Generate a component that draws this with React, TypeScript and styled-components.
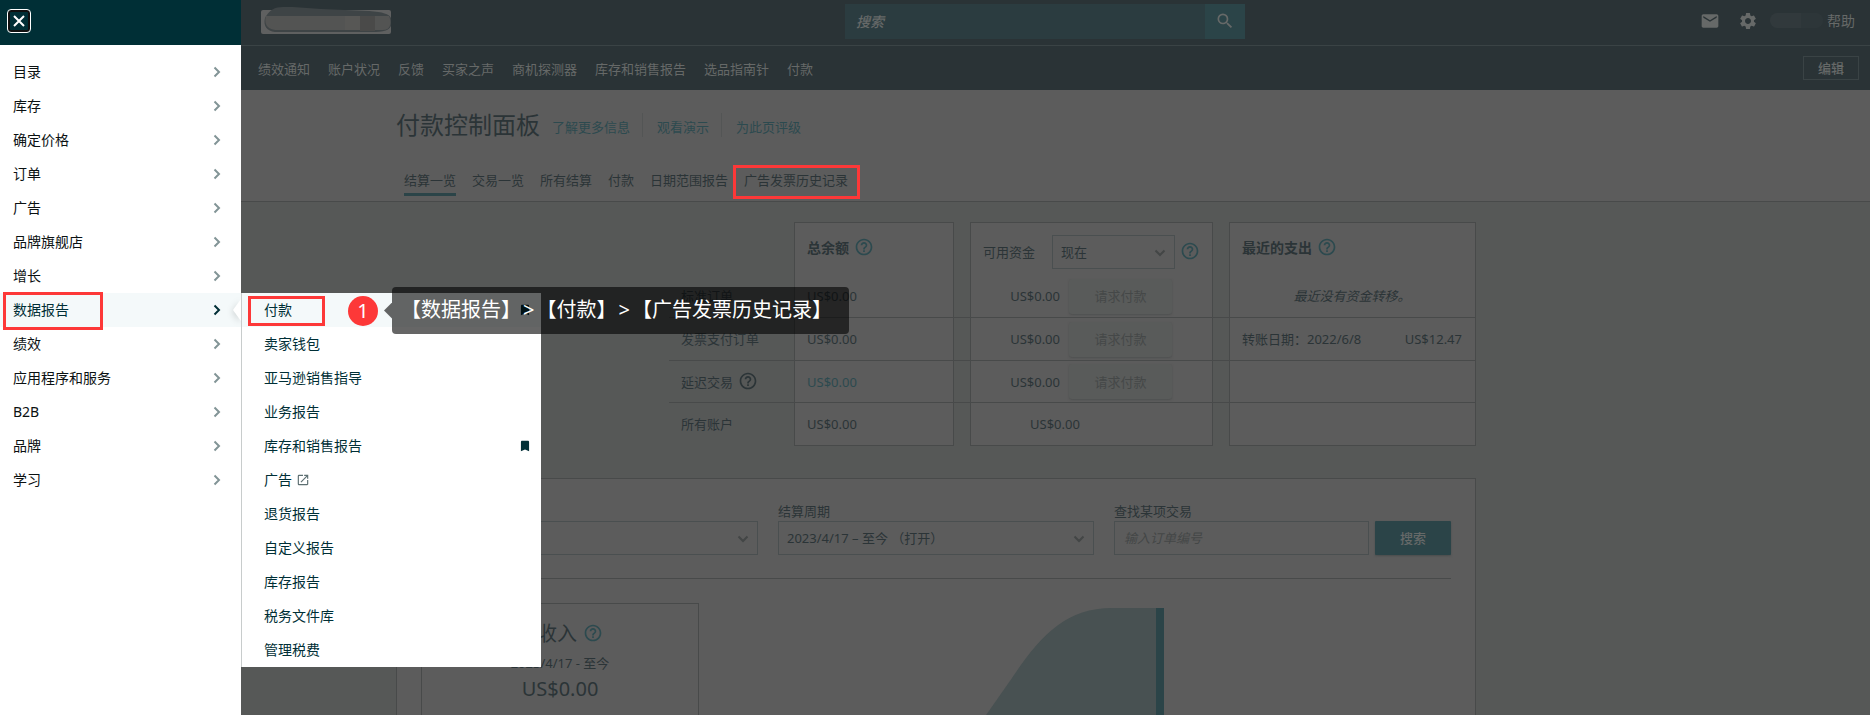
import React from "react";
import styled, { createGlobalStyle } from "styled-components";
import { MdBookmark, MdHelpOutline, MdMail, MdOpenInNew, MdSearch, MdSettings } from "react-icons/md";

const GlobalStyle = createGlobalStyle`
  * { box-sizing: border-box; }
  body {
    margin: 0;
    background: #565857;
    font-family: "Noto Sans", "Noto Sans CJK SC", sans-serif;
    font-size: 13px;
    line-height: 20px;
    color: #2b3437;
  }
  a { color: inherit; text-decoration: none; }
  button, input, select { font: inherit; color: inherit; border-radius: 0; }
  ul { list-style: none; margin: 0; padding: 0; }
`;

const c = {
  bar: "#2a3336",
  barLine: "#3a4345",
  barText: "#666968",
  surface: "#5c5c5c",
  border: "#484a4a",
  teal: "#2b4448",
  link: "#2c4a4f",
  ink: "#002f36",
  mark: "#fd3838",
};

const Screen = styled.div`
  position: relative;
  height: 100vh;
  overflow: hidden;
`;

/* ---------- Top bars ---------- */

const TopBar = styled.header`
  display: grid;
  grid-template-columns: 1fr 400px 1fr;
  align-items: center;
  height: 46px;
  padding: 0 15px 2px 235px;
  background: ${c.bar};
  border-bottom: 1px solid ${c.barLine};
  color: ${c.barText};
  font-size: 14px;
`;

const AccountBox = styled.div`
  width: 130px;
  height: 24px;
  margin-left: 26px;
  background: #5f6060;
  border-radius: 2px;
  svg { display: block; overflow: visible; }
`;

const SearchForm = styled.form`
  display: flex;
  height: 35px;
`;

const SearchInput = styled.input`
  flex: 1;
  min-width: 0;
  padding: 0 11px;
  border: 0;
  background: #2b3c40;
  outline: 0;
  &::placeholder { color: ${c.barText}; font-style: italic; font-weight: 500; opacity: 1; }
`;

const SearchButton = styled.button`
  display: grid;
  place-items: center;
  width: 40px;
  padding: 0 0 2px;
  border: 0;
  background: ${c.teal};
`;

const Tools = styled.div`
  display: flex;
  align-items: center;
  justify-content: flex-end;
  padding-bottom: 2px;
`;

const IconButton = styled.button`
  display: grid;
  place-items: center;
  width: 38px;
  height: 30px;
  padding: 0;
  border: 0;
  background: none;
`;

const NameMask = styled.span`
  width: 53px;
  height: 15px;
  margin: 0 4px 0 3px;
  border-radius: 8px;
  background: linear-gradient(90deg, #31393c 0 58%, #2d3639 58%);
`;

const BookmarkBar = styled.nav`
  display: flex;
  align-items: center;
  gap: 18px;
  height: 44px;
  padding: 0 11px 0 258px;
  background: ${c.bar};
  color: ${c.barText};
  a { padding-top: 2px; }
`;

const EditButton = styled.button`
  width: 56px;
  height: 24px;
  margin: 0 0 0 auto;
  padding: 0;
  border: 1px solid ${c.barLine};
  background: none;
  font-weight: 500;
`;

/* ---------- Page head ---------- */

const Container = styled.div`
  max-width: 1082px;
  margin: 0 auto;
  padding-left: 2px;
`;

const PageHead = styled.div`
  background: ${c.surface};
  border-bottom: 1px solid ${c.border};
`;

const TitleRow = styled.div`
  display: flex;
  align-items: center;
  padding-top: 17px;
`;

const Title = styled.h1`
  margin: 0 12px 0 0;
  font-size: 24px;
  line-height: 36px;
  font-weight: 400;
`;

const HeadLink = styled.a`
  padding-top: 4px;
  color: ${c.link};
  & + & {
    margin-left: 12px;
    padding-left: 14px;
    border-left: 1px solid #535555;
  }
`;

const Tabs = styled.nav`
  display: flex;
  gap: 16px;
  padding: 27px 0 5px 8px;
`;

const Tab = styled.a<{ $active?: boolean }>`
  position: relative;
  padding-bottom: 3px;
  border-bottom: 3px solid ${(p) => (p.$active ? c.teal : "transparent")};
`;

/* ---------- Balance table ---------- */

const TableWrap = styled.div`
  padding: 20px 0 0 273px;
`;

const Table = styled.table`
  width: 100%;
  table-layout: fixed;
  border-collapse: separate;
  border-spacing: 0;
  white-space: nowrap;
`;

const HeadRow = styled.tr`
  height: 53px;
`;

const Row = styled.tr<{ $h: number }>`
  height: ${(p) => p.$h}px;
  & > * { border-bottom: 1px solid ${c.border}; }
`;

const LabelCell = styled.th<{ $last?: boolean }>`
  padding: 0 0 0 12px;
  text-align: left;
  font-weight: 400;
  && { border-bottom-color: ${(p) => (p.$last ? "transparent" : c.border)}; }
`;

const GapCell = styled.td<{ $last?: boolean }>`
  padding: 0;
  && { border-bottom-color: ${(p) => (p.$last ? "transparent" : c.border)}; }
`;

const BoxCell = styled.td<{ $align?: string; $tone?: string; $indent?: number }>`
  padding: 0 13px 0 ${(p) => p.$indent || 12}px;
  background: ${c.surface};
  border-left: 1px solid ${c.border};
  border-right: 1px solid ${c.border};
  text-align: ${(p) => p.$align || "left"};
  color: ${(p) => p.$tone || "inherit"};
`;

const HeadCell = styled.th<{ $top: number }>`
  padding: ${(p) => p.$top}px 6px 0 12px;
  background: ${c.surface};
  border: 1px solid ${c.border};
  border-bottom: 0;
  vertical-align: top;
  text-align: left;
  font-weight: 400;
`;

const Inline = styled.span<{ $end?: boolean }>`
  display: flex;
  align-items: center;
  justify-content: ${(p) => (p.$end ? "space-between" : "flex-start")};
  gap: 5px;
`;

const FundsLabel = styled.label`
  margin-right: 12px;
`;

const Strong = styled.strong`
  font-size: 14px;
  font-weight: 700;
`;

const Help = styled.button<{ $dark?: boolean }>`
  display: grid;
  place-items: center;
  padding: 0 0 2px;
  border: 0;
  background: none;
  color: ${(p) => (p.$dark ? "#2b3437" : c.link)};
`;

const PayCell = styled.span`
  display: flex;
  align-items: center;
  justify-content: flex-end;
  gap: 9px;
  padding-right: 27px;
`;

const RequestButton = styled.button`
  width: 103px;
  height: 35px;
  padding: 0;
  border: 0;
  border-radius: 3px;
  background: #595b5a;
  color: #454848;
  box-shadow: 0 1px 2px #4e5050;
`;

const SelectWrap = styled.span<{ $w?: number }>`
  position: relative;
  display: block;
  width: ${(p) => (p.$w ? `${p.$w}px` : "100%")};
  select {
    appearance: none;
    display: block;
    width: 100%;
    height: 34px;
    padding: 0 30px 0 8px;
    border: 1px solid #4a4f50;
    background: ${c.surface};
  }
  svg {
    position: absolute;
    right: 9px;
    top: 14px;
    pointer-events: none;
  }
`;

/* ---------- Settlement card ---------- */

const Card = styled.section`
  margin-top: 32px;
  min-height: 420px;
  padding: 22px 24px;
  background: ${c.surface};
  border: 1px solid ${c.border};
`;

const Filters = styled.form`
  display: flex;
  align-items: flex-end;
  padding-bottom: 23px;
  border-bottom: 1px solid ${c.border};
`;

const Field = styled.label<{ $flex: number; $gap: number }>`
  flex: ${(p) => p.$flex} 1 0;
  min-width: 0;
  margin-right: ${(p) => p.$gap}px;
`;

const OrderInput = styled.input`
  display: block;
  width: 100%;
  height: 34px;
  padding: 0 9px;
  border: 1px solid #4a4f50;
  background: ${c.surface};
  &::placeholder { color: #444747; font-style: italic; opacity: 1; }
`;

const SubmitButton = styled.button`
  width: 76px;
  height: 34px;
  padding: 0;
  border: 0;
  border-radius: 1px;
  background: ${c.teal};
  color: ${c.barText};
  font-weight: 500;
  box-shadow: 0 1px 2px #4a4d4d;
`;

const Flow = styled.div`
  display: flex;
  align-items: flex-start;
  padding-top: 24px;
`;

const Income = styled.div`
  display: flex;
  flex-direction: column;
  align-items: center;
  width: 278px;
  min-height: 260px;
  padding-top: 14px;
  border: 1px solid ${c.border};
`;

const IncomeTitle = styled.h2`
  display: flex;
  align-items: center;
  gap: 6px;
  margin: 0;
  font-size: 20px;
  line-height: 32px;
  font-weight: 400;
`;

const IncomeDate = styled.span`
  line-height: 26px;
`;

const IncomeSum = styled.span`
  font-size: 20px;
  line-height: 26px;
`;

const FlowChart = styled.svg`
  display: block;
  margin: 5px 0 0 271px;
`;

/* ---------- Drawer ---------- */

const Drawer = styled.aside`
  position: absolute;
  inset: 0 auto 0 0;
  width: 241px;
  background: #fff;
  color: #0b1112;
  font-size: 14px;
`;

const DrawerHead = styled.div`
  display: flex;
  align-items: center;
  height: 45px;
  padding: 0 7px 3px;
  background: ${c.ink};
`;

const CloseButton = styled.button`
  display: grid;
  place-items: center;
  width: 24px;
  height: 24px;
  padding: 0;
  border: 1px solid #fff;
  border-radius: 4px;
  background: ${c.ink};
  box-shadow: inset 0 0 0 2px #101010;
`;

const MenuList = styled.ul`
  padding-top: 10px;
`;

const MenuItem = styled.li<{ $active?: boolean }>`
  position: relative;
  background: ${(p) => (p.$active ? "#f4f9fa" : "transparent")};
  color: ${(p) => (p.$active ? c.ink : "#0b1112")};
  & > a {
    display: flex;
    align-items: center;
    justify-content: space-between;
    height: 34px;
    padding: 0 20px 0 13px;
  }
`;

const Notch = styled.span`
  position: absolute;
  right: 0;
  top: 6px;
  filter: drop-shadow(-1px 2px 3px rgba(0, 0, 0, 0.15));
  &::before {
    content: "";
    display: block;
    width: 8px;
    height: 22px;
    background: #fff;
    clip-path: polygon(100% 0, 100% 100%, 0 50%);
  }
`;

const SubMenu = styled.ul`
  position: absolute;
  left: 241px;
  top: 0;
  width: 300px;
  background: #fff;
  border-left: 1px solid #c8cccc;
  color: ${c.ink};
`;

const SubItem = styled.li<{ $active?: boolean }>`
  background: ${(p) => (p.$active ? "#f4f9fa" : "transparent")};
  & > a {
    display: flex;
    align-items: center;
    gap: 4px;
    height: 34px;
    padding: 0 9px 0 22px;
  }
  .pin { margin-left: auto; }
  .out { color: #5d6f72; }
`;

/* ---------- Annotations ---------- */

const Outline = styled.span<{ $inset: string }>`
  position: absolute;
  inset: ${(p) => p.$inset};
  border: 3px solid ${c.mark};
  pointer-events: none;
`;

const Step = styled.div`
  position: absolute;
  left: 106px;
  top: -6px;
  display: flex;
  align-items: center;
  color: #fff;
  font-size: 20px;
  white-space: nowrap;
`;

const StepNumber = styled.span`
  display: grid;
  place-items: center;
  width: 30px;
  height: 30px;
  border-radius: 50%;
  background: ${c.mark};
`;

const StepArrow = styled.span`
  width: 8px;
  height: 16px;
  margin-left: 6px;
  background: rgba(0, 0, 0, 0.6);
  clip-path: polygon(100% 0, 100% 100%, 0 50%);
`;

const StepText = styled.span`
  height: 47px;
  padding: 0 17px 0 9px;
  line-height: 46px;
  border-radius: 4px;
  background: rgba(0, 0, 0, 0.6);
`;

const Arrow = styled.span`
  margin: 0 2px;
`;

const Chevron = ({ color }: { color: string }) => (
  <svg width="8" height="12" viewBox="0 0 8 12" fill="none" stroke={color} strokeWidth="2">
    <path d="M1.500 1.500 6 6 1.500 10.500" />
  </svg>
);

const DownArrow = () => (
  <svg width="12" height="8" viewBox="0 0 12 8" fill="none" stroke="#434646" strokeWidth="2">
    <path d="M1.500 1.500 6 6 10.500 1.500" />
  </svg>
);

const HelpIcon = ({ label, dark }: { label: string; dark?: boolean }) => (
  <Help type="button" aria-label={label} $dark={dark}>
    <MdHelpOutline size={20} />
  </Help>
);

const bookmarks = ["绩效通知", "账户状况", "反馈", "买家之声", "商机探测器", "库存和销售报告", "选品指南针", "付款"];
const tabs = ["结算一览", "交易一览", "所有结算", "付款", "日期范围报告", "广告发票历史记录"];
const menu = ["目录", "库存", "确定价格", "订单", "广告", "品牌旗舰店", "增长", "数据报告", "绩效", "应用程序和服务", "B2B", "品牌", "学习"];
const reports = ["付款", "卖家钱包", "亚马逊销售指导", "业务报告", "库存和销售报告", "广告", "退货报告", "自定义报告", "库存报告", "税务文件库", "管理税费"];
const pinned = ["付款", "库存和销售报告"];

const Pay = () => (
  <PayCell>
    US$0.00
    <RequestButton type="button">请求付款</RequestButton>
  </PayCell>
);

export default function App() {
  return (
    <Screen>
      <GlobalStyle />
      <TopBar>
        <AccountBox>
          <svg width="130" height="24" viewBox="0 0 130 24">
            <path d="M4 8C8 0 14-3 22-3H32L60-1 108 1C122 2 128 4 130 8V16C127 22 120 22 104 22H14C6 21 2 16 4 8Z" fill="#3e4446" />
            <path d="M5 6H128C131 12 130 20 122 20H14C5 19 3 12 5 6Z" fill="#535453" />
            <path d="M84 6h15v14H84z" fill="#575755" />
            <path d="M99 6h15v15H99z" fill="#4a4a49" />
          </svg>
        </AccountBox>
        <SearchForm>
          <SearchInput type="text" placeholder="搜索" aria-label="搜索" />
          <SearchButton type="button" aria-label="提交搜索">
            <MdSearch size={20} />
          </SearchButton>
        </SearchForm>
        <Tools>
          <IconButton type="button" aria-label="邮件">
            <MdMail size={20} />
          </IconButton>
          <IconButton type="button" aria-label="设置">
            <MdSettings size={20} />
          </IconButton>
          <NameMask />
          <a href="#help">帮助</a>
        </Tools>
      </TopBar>
      <BookmarkBar>
        {bookmarks.map((b) => (
          <a href="#bookmark" key={b}>{b}</a>
        ))}
        <EditButton type="button">编辑</EditButton>
      </BookmarkBar>

      <PageHead>
        <Container>
          <TitleRow>
            <Title>付款控制面板</Title>
            <HeadLink href="#more">了解更多信息</HeadLink>
            <HeadLink href="#demo">观看演示</HeadLink>
            <HeadLink href="#rate">为此页评级</HeadLink>
          </TitleRow>
          <Tabs>
            {tabs.map((t, i) => (
              <Tab href="#tab" key={t} $active={i === 0}>
                {t}
                {i === tabs.length - 1 && <Outline $inset="-5px -12px -6px -11px" />}
              </Tab>
            ))}
          </Tabs>
        </Container>
      </PageHead>

      <Container>
        <TableWrap>
          <Table>
            <colgroup>
              <col />
              <col width="160" />
              <col width="16" />
              <col width="243" />
              <col width="16" />
              <col width="247" />
            </colgroup>
            <thead>
              <HeadRow>
                <td />
                <HeadCell $top={14}>
                  <Inline>
                    <Strong>总余额</Strong>
                    <HelpIcon label="总余额说明" />
                  </Inline>
                </HeadCell>
                <td />
                <HeadCell $top={12}>
                  <Inline>
                    <FundsLabel htmlFor="funds">可用资金</FundsLabel>
                    <SelectWrap $w={123}>
                      <select id="funds"><option>现在</option></select>
                      <DownArrow />
                    </SelectWrap>
                    <HelpIcon label="可用资金说明" />
                  </Inline>
                </HeadCell>
                <td />
                <HeadCell $top={14}>
                  <Inline>
                    <Strong>最近的支出</Strong>
                    <HelpIcon label="最近的支出说明" />
                  </Inline>
                </HeadCell>
              </HeadRow>
            </thead>
            <tbody>
              <Row $h={43}>
                <LabelCell scope="row">标准订单</LabelCell>
                <BoxCell>US$0.00</BoxCell>
                <GapCell />
                <BoxCell><Pay /></BoxCell>
                <GapCell />
                <BoxCell $align="center"><em>最近没有资金转移。</em></BoxCell>
              </Row>
              <Row $h={43}>
                <LabelCell scope="row">发票支付订单</LabelCell>
                <BoxCell>US$0.00</BoxCell>
                <GapCell />
                <BoxCell><Pay /></BoxCell>
                <GapCell />
                <BoxCell>
                  <Inline $end>
                    <span>转账日期：2022/6/8</span>
                    <span>US$12.47</span>
                  </Inline>
                </BoxCell>
              </Row>
              <Row $h={42}>
                <LabelCell scope="row">
                  <Inline>
                    延迟交易
                    <HelpIcon label="延迟交易说明" dark />
                  </Inline>
                </LabelCell>
                <BoxCell $tone={c.link}>US$0.00</BoxCell>
                <GapCell />
                <BoxCell><Pay /></BoxCell>
                <GapCell />
                <BoxCell />
              </Row>
              <Row $h={43}>
                <LabelCell scope="row" $last>所有账户</LabelCell>
                <BoxCell>US$0.00</BoxCell>
                <GapCell $last />
                <BoxCell $indent={59}>US$0.00</BoxCell>
                <GapCell $last />
                <BoxCell />
              </Row>
            </tbody>
          </Table>
        </TableWrap>

        <Card>
          <Filters>
            <Field $flex={337} $gap={20}>
              账户类型
              <SelectWrap>
                <select><option>标准订单</option></select>
                <DownArrow />
              </SelectWrap>
            </Field>
            <Field $flex={316} $gap={20}>
              结算周期
              <SelectWrap>
                <select><option>2023/4/17 – 至今 （打开）</option></select>
                <DownArrow />
              </SelectWrap>
            </Field>
            <Field $flex={255} $gap={6}>
              查找某项交易
              <OrderInput type="text" placeholder="输入订单编号" />
            </Field>
            <SubmitButton type="button">搜索</SubmitButton>
          </Filters>
          <Flow>
            <Income>
              <IncomeTitle>
                净收入
                <HelpIcon label="净收入说明" />
              </IncomeTitle>
              <IncomeDate>2023/4/17 - 至今</IncomeDate>
              <IncomeSum>US$0.00</IncomeSum>
            </Income>
            <FlowChart width="194" height="220" viewBox="0 0 194 220">
              <path d="M0 130 42 70C70 28 96 0 142 0H186V220H0Z" fill="#485152" />
              <path d="M186 0h8v220h-8z" fill={c.teal} />
            </FlowChart>
          </Flow>
        </Card>
      </Container>

      <Drawer>
        <DrawerHead>
          <CloseButton type="button" aria-label="关闭菜单">
            <svg width="12" height="12" viewBox="0 0 12 12" stroke="#fff" strokeWidth="2">
              <path d="M1 1 11 11M11 1 1 11" />
            </svg>
          </CloseButton>
        </DrawerHead>
        <MenuList>
          {menu.map((m) => {
            const active = m === "数据报告";
            return (
              <MenuItem key={m} $active={active}>
                <a href="#menu">
                  {m}
                  <Chevron color={active ? c.ink : "#829496"} />
                </a>
                {active && (
                  <>
                    <Notch />
                    <Outline $inset="-1px 138px -3px 3px" />
                    <SubMenu>
                      {reports.map((r, i) => (
                        <SubItem key={r} $active={i === 0}>
                          <a href="#report">
                            {r}
                            {r === "广告" && <MdOpenInNew className="out" size={14} />}
                            {pinned.includes(r) && <MdBookmark className="pin" size={14} />}
                          </a>
                        </SubItem>
                      ))}
                      <Outline $inset="3px 216px 341px 6px" />
                      <Step>
                        <StepNumber>1</StepNumber>
                        <StepArrow />
                        <StepText>
                          【数据报告】<Arrow>&gt;</Arrow>【付款】<Arrow>&gt;</Arrow>【广告发票历史记录】
                        </StepText>
                      </Step>
                    </SubMenu>
                  </>
                )}
              </MenuItem>
            );
          })}
        </MenuList>
      </Drawer>
    </Screen>
  );
}
